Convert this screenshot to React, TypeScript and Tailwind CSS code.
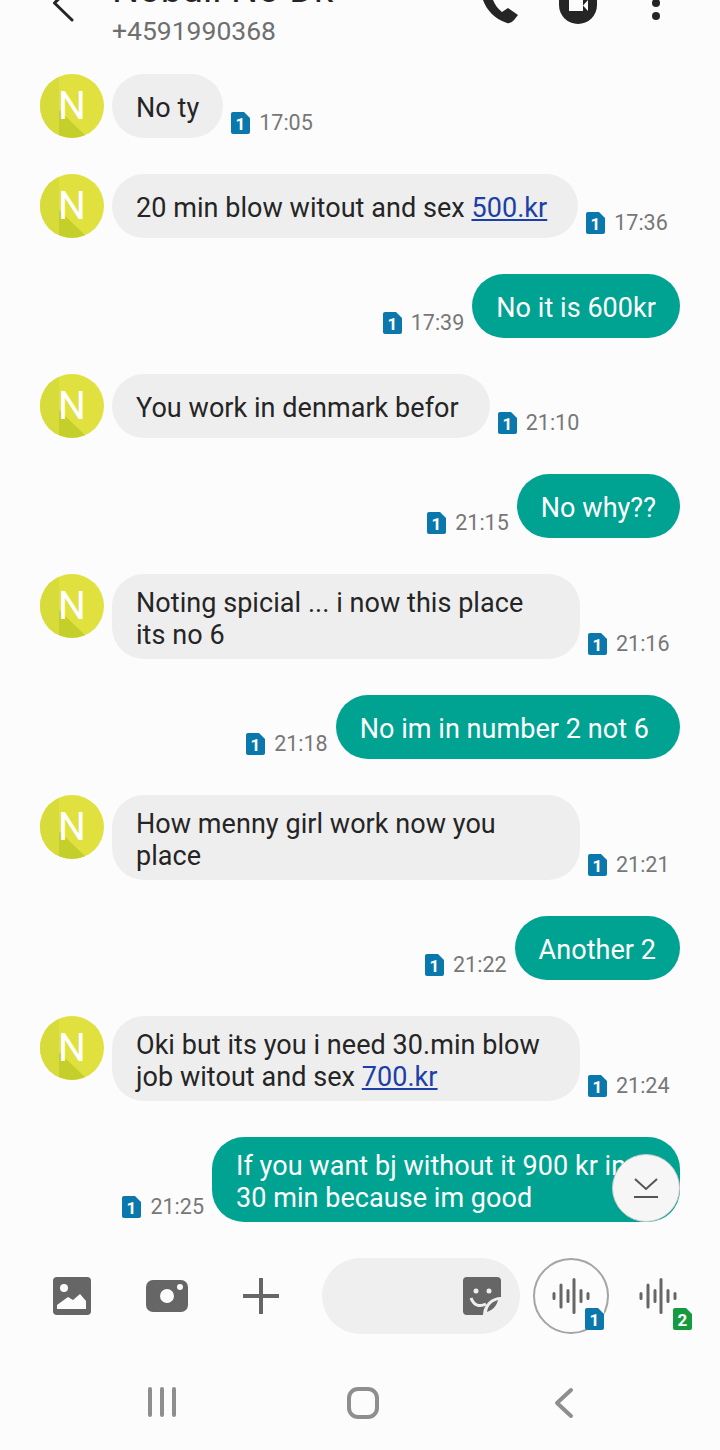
import { Fragment } from "react";

const bodyFont = { fontFamily: "Roboto, sans-serif" };

type Message = {
  from: "them" | "me";
  text: string;
  link?: string;
  time: string;
  wide?: boolean;
  long?: boolean;
};

const messages: Message[] = [
  { from: "them", text: "No ty", time: "17:05" },
  { from: "them", text: "20 min blow witout and sex ", link: "500.kr", time: "17:36", long: true },
  { from: "me", text: "No it is 600kr", time: "17:39" },
  { from: "them", text: "You work in denmark befor", time: "21:10", long: true },
  { from: "me", text: "No why??", time: "21:15" },
  { from: "them", text: "Noting spicial ... i now this place its no 6", time: "21:16", wide: true },
  { from: "me", text: "No im in number 2 not 6", time: "21:18", long: true },
  { from: "them", text: "How menny girl work now you place", time: "21:21", wide: true },
  { from: "me", text: "Another 2", time: "21:22" },
  { from: "them", text: "Oki but its you i need 30.min blow job witout and sex ", link: "700.kr", time: "21:24", wide: true },
  { from: "me", text: "If you want bj without it 900 kr in 30 min because im good", time: "21:25", wide: true },
];

function SimBadge({ n = "1", color = "#0a78ad" }: { n?: string; color?: string }) {
  return (
    <svg width="19" height="22" viewBox="0 0 19 22" className="shrink-0">
      <path d="M2 0h11l6 6v14a2 2 0 0 1-2 2H2a2 2 0 0 1-2-2V2a2 2 0 0 1 2-2z" fill={color} />
      <text x="9.5" y="18" textAnchor="middle" fontSize="17" fontWeight="700" fill="#fff" fontFamily="Roboto, sans-serif">
        {n}
      </text>
    </svg>
  );
}

function Avatar() {
  return (
    <div className="relative w-16 h-16 shrink-0 self-start rounded-full overflow-hidden bg-[#e0e13e] flex items-center justify-center pt-px">
      <svg width="64" height="64" viewBox="0 0 64 64" className="absolute inset-0">
        <path d="M0 0 H19 V64 H0 Z" fill="#d8dc3a" />
        <path d="M19 36 L48 64 H19 Z" fill="#c5cf2c" />
      </svg>
      <span className="relative text-white text-[39px] leading-none">N</span>
    </div>
  );
}

function Wave() {
  return (
    <svg width="38" height="36" viewBox="0 0 38 36" fill="none" stroke="#666" strokeWidth="3" strokeLinecap="round">
      <path d="M2 15.5v5M9 7v22M16 12.500v11M22 1.500v33M29 12.500v11M36 15.500v5" />
    </svg>
  );
}

function Bubble({ m }: { m: Message }) {
  const mine = m.from === "me";
  return (
    <div
      className={`min-h-16 rounded-[32px] pl-6 pt-[12.5px] pb-[8.5px] flex items-center text-[27px] leading-[32px] tracking-[0.05px] ${
        m.long ? "pr-[31px]" : "pr-6"
      } ${mine ? "bg-[#00a392] text-white" : "bg-[#eeeeee] text-[#252525]"} ${m.wide ? "w-[468px] shrink-0" : ""}`}
    >
      <p>
        {m.text}
        {m.link && <span className="underline text-[#1c3fa8]">{m.link}</span>}
      </p>
    </div>
  );
}

function Stamp({ time }: { time: string }) {
  return (
    <div className="flex items-center gap-[9px] pb-[2px] text-[21.5px] leading-[26px] text-[#777777] shrink-0">
      <SimBadge />
      <span>{time}</span>
    </div>
  );
}

export default function App() {
  return (
    <div className="w-[720px] h-[1450px] overflow-hidden flex flex-col bg-[#fcfcfc]" style={bodyFont}>
      <header className="h-[74px] shrink-0 pl-[52px] pr-[59px] flex items-start justify-between">
        <div className="flex gap-[36px]">
          <svg width="24" height="24" viewBox="0 0 24 24" fill="none" stroke="#252525" strokeWidth="3" strokeLinecap="round" strokeLinejoin="round" className="overflow-visible">
            <path d="M20 -14 L2.500 3 L20 20" />
          </svg>
          <div className="-mt-[30px]">
            <p className="text-[38px] leading-[38px] text-[#252525]">Nobuli No Dk</p>
            <p className="text-[26.5px] leading-[30px] mt-[8px] text-[#6f6f6f]">+4591990368</p>
          </div>
        </div>
        <div className="flex items-start">
          <svg width="40" height="24" viewBox="0 0 40 24">
            <path d="M3 -8 C5 6 14 18 29 23 Q33 24 36 20 L40 15 L30 8 L24 12 C20 9 17 5 15 0 L18 -8 Z" fill="#252525" />
          </svg>
          <svg width="38" height="24" viewBox="0 0 38 24" className="ml-[41px]">
            <path d="M0 0 H38 V5 A19 19 0 0 1 0 5 Z" fill="#252525" />
            <path d="M10 0 H24 V11 H10 Z M24 5.500 L29 0 V11 Z" fill="#fcfcfc" />
          </svg>
          <svg width="10" height="24" viewBox="0 0 10 24" className="ml-[54px]">
            <circle cx="5" cy="3" r="4" fill="#252525" />
            <circle cx="5" cy="16" r="4" fill="#252525" />
          </svg>
        </div>
      </header>

      <main className="relative h-[1148px] shrink-0 px-10 flex flex-col gap-9">
        {messages.map((m) => (
          <Fragment key={m.time}>
            {m.from === "them" ? (
              <div className="flex items-end gap-2">
                <Avatar />
                <Bubble m={m} />
                <Stamp time={m.time} />
              </div>
            ) : (
              <div className="flex items-end justify-end gap-2">
                <Stamp time={m.time} />
                <Bubble m={m} />
              </div>
            )}
          </Fragment>
        ))}
        <button className="absolute right-10 top-[1080px] w-[68px] h-[68px] rounded-full bg-[#f6f6f6] border border-[#c9c9c9] flex items-center justify-center">
          <svg width="28" height="22" viewBox="0 0 28 22" fill="none" stroke="#555" strokeWidth="2">
            <path d="M3 2 L14 12 L25 2 M2 20 H26" />
          </svg>
        </button>
      </main>

      <div className="h-[76px] mt-[36px] shrink-0 flex items-center pl-[53px]">
        <svg width="38" height="38" viewBox="0 0 38 38">
          <rect width="38" height="38" rx="4" fill="#666" />
          <circle cx="11" cy="11" r="4" fill="#fcfcfc" />
          <path d="M4 32 V28 L15 20 L20 23 L27 17 L33 24 V32 Z" fill="#fcfcfc" />
        </svg>
        <svg width="42" height="32" viewBox="0 0 42 32" className="ml-[55px]">
          <rect width="42" height="32" rx="7" fill="#666" />
          <circle cx="21" cy="16" r="7" fill="#fcfcfc" />
          <circle cx="34" cy="7" r="3" fill="#fcfcfc" />
        </svg>
        <svg width="36" height="36" viewBox="0 0 36 36" className="ml-[55px]" stroke="#666" strokeWidth="4">
          <path d="M18 0v36M0 18h36" />
        </svg>
        <div className="ml-[43px] w-[198px] h-[76px] rounded-full bg-[#efefef] flex items-center justify-end pr-[19px]">
          <svg width="38" height="38" viewBox="0 0 38 38">
            <rect width="38" height="38" rx="4" fill="#666" />
            <circle cx="13" cy="14" r="2.500" fill="#efefef" />
            <circle cx="26" cy="14" r="2.500" fill="#efefef" />
            <path d="M8 21 C11 29 17 30 23 27" fill="none" stroke="#efefef" strokeWidth="3" />
            <path d="M20 38 C20 28 28 20 38 20 V38 Z" fill="#efefef" />
            <path d="M24 35 C25 28 29 25 35 23 C34 28 30 33 24 35 Z" fill="#666" />
          </svg>
        </div>
        <div className="relative ml-[13px] w-[76px] h-[76px] rounded-full border-2 border-[#a5a5a5] flex items-center justify-center">
          <Wave />
          <div className="absolute right-[3px] bottom-[2px] bg-[#fcfcfc] rounded-[3px]">
            <SimBadge />
          </div>
        </div>
        <div className="relative ml-[30px]">
          <Wave />
          <div className="absolute -right-[15px] -bottom-[16px]">
            <SimBadge n="2" color="#159a3f" />
          </div>
        </div>
      </div>

      <nav className="h-[116px] shrink-0 flex items-start pt-[53px]">
        <div className="w-[324px] flex justify-end pr-[148px] gap-2">
          <span className="w-1 h-[30px] rounded bg-[#8e8e8e]" />
          <span className="w-1 h-[30px] rounded bg-[#8e8e8e]" />
          <span className="w-1 h-[30px] rounded bg-[#8e8e8e]" />
        </div>
        <span className="ml-[23px] w-[32px] h-[32px] rounded-[11px] border-[4px] border-[#8e8e8e]" />
        <svg width="20" height="32" viewBox="0 0 20 32" className="ml-[175px]" fill="none" stroke="#8e8e8e" strokeWidth="4" strokeLinecap="round" strokeLinejoin="round">
          <path d="M17 3 L3 16 L17 29" />
        </svg>
      </nav>
    </div>
  );
}
